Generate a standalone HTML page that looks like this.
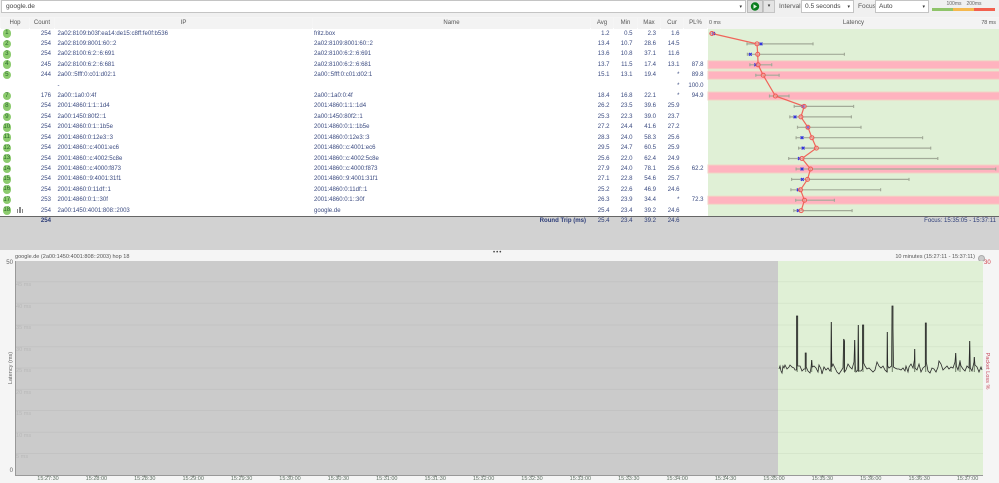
<!DOCTYPE html>
<html><head><meta charset="utf-8"><style>
html,body{margin:0;padding:0;width:999px;height:482px;overflow:hidden;background:#f5f5f5;font-family:"Liberation Sans",sans-serif;font-size:6.05px;color:#3a4a80}
div,span{position:absolute;white-space:nowrap}
.b{background:#fff;border:1px solid #c4c4c4;box-sizing:border-box;height:13px;top:0;line-height:12px;color:#444;font-size:6.6px}
.t{color:#555;font-size:6.6px;top:0;line-height:13px}
.th{top:18px;height:10.5px;line-height:10.5px;background:#f3f3f3;text-align:center;color:#555}
.r{left:0;width:708px;height:10px;line-height:10px}
.h{left:2.5px;top:.7px;width:8.6px;height:8.6px;line-height:8.6px;border-radius:50%;background:#8ccb6e;color:#2c6a2c;text-align:center;font-size:6.2px}
.c{left:20px;width:31px;text-align:right}
.i{left:57.5px}.n{left:314px}
.a{left:580px;width:29.5px;text-align:right}
.m{left:603px;width:29.5px;text-align:right}
.x{left:626px;width:30px;text-align:right}
.u{left:650px;width:29.5px;text-align:right}
.p{left:674px;width:29.5px;text-align:right}
.g{color:#b8b8b8;left:16px;font-size:5.6px;line-height:8px}
.tm{top:475px;width:40px;text-align:center;color:#5c6e60;font-size:5.5px;line-height:8px}
</style></head><body>
<div style="left:0;top:0;width:999px;height:17px;background:#f0f0f0"></div>
<div class="b" style="left:1px;width:745px;padding-left:4px">google.de<span style="right:3px;top:0;font-size:5px;color:#333">▾</span></div>
<div style="left:747px;top:0;width:16px;height:13px;background:#ddd;border:1px solid #bbb;box-sizing:border-box"></div>
<svg style="position:absolute;left:747px;top:0" width="16" height="13"><circle cx="8" cy="6.5" r="4.2" fill="#0a7d1e"/><path d="M6.5 4.3V8.7L10 6.5Z" fill="#dff5df"/></svg>
<div style="left:763px;top:0;width:12px;height:13px;background:#e4e4e4;border:1px solid #c4c4c4;box-sizing:border-box;text-align:center;line-height:11px;font-size:5px;color:#333">▾</div>
<div class="t" style="left:779px">Interval</div>
<div class="b" style="left:801px;width:53px;padding-left:3px">0.5 seconds<span style="right:3px;top:0;font-size:5px;color:#333">▾</span></div>
<div class="t" style="left:858px">Focus</div>
<div class="b" style="left:875px;width:54px;padding-left:3px">Auto<span style="right:3px;top:0;font-size:5px;color:#333">▾</span></div>
<div style="left:932px;top:7.5px;width:21px;height:3px;background:#8fc46a"></div>
<div style="left:953px;top:7.5px;width:21px;height:3px;background:#f5b84e"></div>
<div style="left:974px;top:7.5px;width:21px;height:3px;background:#f2604e"></div>
<div style="left:946px;top:1px;width:16px;text-align:center;font-size:5px;color:#666;line-height:6px">100ms</div>
<div style="left:966px;top:1px;width:16px;text-align:center;font-size:5px;color:#666;line-height:6px">200ms</div>

<div style="left:0;top:28px;width:708px;height:188px;background:#fff"></div>
<div style="left:708px;top:18px;width:291px;height:198px;background:#e0f0d6"></div>
<div class="th" style="left:1px;width:28px">Hop</div>
<div class="th" style="left:30px;width:24px">Count</div>
<div class="th" style="left:55px;width:257px">IP</div>
<div class="th" style="left:313px;width:277px">Name</div>
<div class="th" style="left:591px;width:22px">Avg</div>
<div class="th" style="left:614px;width:23px">Min</div>
<div class="th" style="left:638px;width:22px">Max</div>
<div class="th" style="left:661px;width:22px">Cur</div>
<div class="th" style="left:684px;width:23px">PL%</div>
<div class="th" style="left:708px;width:291px">Latency</div>
<div style="left:709px;top:18px;line-height:10.5px;font-size:5.4px;color:#555">0 ms</div>
<div style="right:3px;top:18px;line-height:10.5px;font-size:5.4px;color:#555">78 ms</div>

<div class="r" style="top:28.5px"><span class="h">1</span><span class="c">254</span><span class="i">2a02:8109:b03f:ea14:de15:c8ff:fe0f:b536</span><span class="n">fritz.box</span><span class="a">1.2</span><span class="m">0.5</span><span class="x">2.3</span><span class="u">1.6</span></div>
<div class="r" style="top:38.9px"><span class="h">2</span><span class="c">254</span><span class="i">2a02:8109:8001:60::2</span><span class="n">2a02:8109:8001:60::2</span><span class="a">13.4</span><span class="m">10.7</span><span class="x">28.6</span><span class="u">14.5</span></div>
<div class="r" style="top:49.3px"><span class="h">3</span><span class="c">254</span><span class="i">2a02:8100:6:2::6:691</span><span class="n">2a02:8100:6:2::6:691</span><span class="a">13.6</span><span class="m">10.8</span><span class="x">37.1</span><span class="u">11.6</span></div>
<div class="r" style="top:59.8px"><span class="h">4</span><span class="c">245</span><span class="i">2a02:8100:6:2::6:681</span><span class="n">2a02:8100:6:2::6:681</span><span class="a">13.7</span><span class="m">11.5</span><span class="x">17.4</span><span class="u">13.1</span><span class="p">87.8</span></div>
<div class="r" style="top:70.2px"><span class="h">5</span><span class="c">244</span><span class="i">2a00::5fff:0:c01:d02:1</span><span class="n">2a00::5fff:0:c01:d02:1</span><span class="a">15.1</span><span class="m">13.1</span><span class="x">19.4</span><span class="u">*</span><span class="p">89.8</span></div>
<div class="r" style="top:80.6px"><span class="i">-</span><span class="u">*</span><span class="p">100.0</span></div>
<div class="r" style="top:91px"><span class="h">7</span><span class="c">176</span><span class="i">2a00::1a0:0:4f</span><span class="n">2a00::1a0:0:4f</span><span class="a">18.4</span><span class="m">16.8</span><span class="x">22.1</span><span class="u">*</span><span class="p">94.9</span></div>
<div class="r" style="top:101.4px"><span class="h">8</span><span class="c">254</span><span class="i">2001:4860:1:1::1d4</span><span class="n">2001:4860:1:1::1d4</span><span class="a">26.2</span><span class="m">23.5</span><span class="x">39.6</span><span class="u">25.9</span></div>
<div class="r" style="top:111.9px"><span class="h">9</span><span class="c">254</span><span class="i">2a00:1450:80f2::1</span><span class="n">2a00:1450:80f2::1</span><span class="a">25.3</span><span class="m">22.3</span><span class="x">39.0</span><span class="u">23.7</span></div>
<div class="r" style="top:122.3px"><span class="h">10</span><span class="c">254</span><span class="i">2001:4860:0:1::1b5e</span><span class="n">2001:4860:0:1::1b5e</span><span class="a">27.2</span><span class="m">24.4</span><span class="x">41.6</span><span class="u">27.2</span></div>
<div class="r" style="top:132.7px"><span class="h">11</span><span class="c">254</span><span class="i">2001:4860:0:12e3::3</span><span class="n">2001:4860:0:12e3::3</span><span class="a">28.3</span><span class="m">24.0</span><span class="x">58.3</span><span class="u">25.6</span></div>
<div class="r" style="top:143.1px"><span class="h">12</span><span class="c">254</span><span class="i">2001:4860::c:4001:ec6</span><span class="n">2001:4860::c:4001:ec6</span><span class="a">29.5</span><span class="m">24.7</span><span class="x">60.5</span><span class="u">25.9</span></div>
<div class="r" style="top:153.5px"><span class="h">13</span><span class="c">254</span><span class="i">2001:4860::c:4002:5c8e</span><span class="n">2001:4860::c:4002:5c8e</span><span class="a">25.6</span><span class="m">22.0</span><span class="x">62.4</span><span class="u">24.9</span></div>
<div class="r" style="top:164px"><span class="h">14</span><span class="c">254</span><span class="i">2001:4860::c:4000:f873</span><span class="n">2001:4860::c:4000:f873</span><span class="a">27.9</span><span class="m">24.0</span><span class="x">78.1</span><span class="u">25.6</span><span class="p">62.2</span></div>
<div class="r" style="top:174.4px"><span class="h">15</span><span class="c">254</span><span class="i">2001:4860::9:4001:31f1</span><span class="n">2001:4860::9:4001:31f1</span><span class="a">27.1</span><span class="m">22.8</span><span class="x">54.6</span><span class="u">25.7</span></div>
<div class="r" style="top:184.8px"><span class="h">16</span><span class="c">254</span><span class="i">2001:4860:0:11df::1</span><span class="n">2001:4860:0:11df::1</span><span class="a">25.2</span><span class="m">22.6</span><span class="x">46.9</span><span class="u">24.6</span></div>
<div class="r" style="top:195.2px"><span class="h">17</span><span class="c">253</span><span class="i">2001:4860:0:1::30f</span><span class="n">2001:4860:0:1::30f</span><span class="a">26.3</span><span class="m">23.9</span><span class="x">34.4</span><span class="u">*</span><span class="p">72.3</span></div>
<div class="r" style="top:205.6px"><span class="h">18</span><span style="left:17px;top:3px;width:1.4px;height:4px;background:#888"></span><span style="left:19.3px;top:1.5px;width:1.4px;height:5.5px;background:#888"></span><span style="left:21.6px;top:3.5px;width:1.4px;height:3.5px;background:#888"></span><span class="c">254</span><span class="i">2a00:1450:4001:808::2003</span><span class="n">google.de</span><span class="a">25.4</span><span class="m">23.4</span><span class="x">39.2</span><span class="u">24.6</span></div>

<svg style="position:absolute;left:0;top:0" width="999" height="216" fill="none">
<g fill="#ffb3bf" stroke="#f2d3c4" stroke-width="1">
<rect x="708" y="60.8" width="292" height="8"/><rect x="708" y="71.2" width="292" height="8"/><rect x="708" y="92" width="292" height="8"/><rect x="708" y="165" width="292" height="8"/><rect x="708" y="196.2" width="292" height="8"/>
</g>
<path stroke="#a2aa98" stroke-width="1.2" d="M709.3 33.5H716M747 43.9H813M747 42.4V45.4M813 42.4V45.4M747.4 54.3H844.4M747.4 52.8V55.8M844.4 52.8V55.8M749.9 64.8H771.7M749.9 63.3V66.3M771.7 63.3V66.3M755.8 75.2H779.1M755.8 73.7V76.7M779.1 73.7V76.7M769.5 96H789M769.5 94.5V97.5M789 94.5V97.5M794.2 106.4H853.6M794.2 104.9V107.9M853.6 104.9V107.9M789.8 116.9H851.4M789.8 115.4V118.4M851.4 115.4V118.4M797.5 127.3H861M797.5 125.8V128.8M861 125.8V128.8M796.1 137.7H922.6M796.1 136.2V139.2M922.6 136.2V139.2M798.6 148.1H930.7M798.6 146.6V149.6M930.7 146.6V149.6M788.7 158.5H937.8M788.7 157V160M937.8 157V160M796.1 169H995.7M796.1 167.5V170.5M995.7 167.5V170.5M791.6 179.4H909M791.6 177.9V180.9M909 177.9V180.9M790.9 189.8H880.6M790.9 188.3V191.3M880.6 188.3V191.3M795.7 200.2H834.4M795.7 198.7V201.7M834.4 198.7V201.7M793.8 210.6H852.1M793.8 209.1V212.1M852.1 209.1V212.1"/>
<path stroke="#f0645a" stroke-width="1.2" d="M711.9 33.5L757 43.9L757.7 54.3L758.1 64.8L763.2 75.2L775.4 96L804.2 106.4L800.9 116.9L807.9 127.3L811.9 137.7L816.4 148.1L802 158.5L810.5 169L807.5 179.4L800.5 189.8L804.5 200.2L801.2 210.6"/>
<path stroke="#3030e0" stroke-width="1.2" d="M712 32.1l2.8 2.8m0-2.8l-2.8 2.8M759.6 42.5l2.8 2.8m0-2.8l-2.8 2.8M748.9 52.9l2.8 2.8m0-2.8l-2.8 2.8M754.4 63.4l2.8 2.8m0-2.8l-2.8 2.8M801.7 105l2.8 2.8m0-2.8l-2.8 2.8M793.6 115.5l2.8 2.8m0-2.8l-2.8 2.8M806.5 125.9l2.8 2.8m0-2.8l-2.8 2.8M800.6 136.3l2.8 2.8m0-2.8l-2.8 2.8M801.7 146.7l2.8 2.8m0-2.8l-2.8 2.8M798 157.1l2.8 2.8m0-2.8l-2.8 2.8M800.6 167.6l2.8 2.8m0-2.8l-2.8 2.8M800.9 178l2.8 2.8m0-2.8l-2.8 2.8M796.9 188.4l2.8 2.8m0-2.8l-2.8 2.8M796.9 209.2l2.8 2.8m0-2.8l-2.8 2.8"/>
<g stroke="#ef5a55" stroke-width="1" fill="#ffc8c4" fill-opacity=".4">
<circle cx="711.9" cy="33.5" r="2"/><circle cx="757" cy="43.9" r="2"/><circle cx="757.7" cy="54.3" r="2"/><circle cx="758.1" cy="64.8" r="2"/><circle cx="763.2" cy="75.2" r="2"/><circle cx="775.4" cy="96" r="2"/><circle cx="804.2" cy="106.4" r="2"/><circle cx="800.9" cy="116.9" r="2"/><circle cx="807.9" cy="127.3" r="2"/><circle cx="811.9" cy="137.7" r="2"/><circle cx="816.4" cy="148.1" r="2"/><circle cx="802" cy="158.5" r="2"/><circle cx="810.5" cy="169" r="2"/><circle cx="807.5" cy="179.4" r="2"/><circle cx="800.5" cy="189.8" r="2"/><circle cx="804.5" cy="200.2" r="2"/><circle cx="801.2" cy="210.6" r="2"/>
</g>
</svg>

<div style="left:0;top:216px;width:999px;height:1px;background:#666"></div>
<div style="left:0;top:217px;width:999px;height:33px;background:#d2d2d2"></div>
<div class="r" style="top:215.5px;font-weight:bold;color:#2c3c78;width:999px"><span class="c">254</span><span style="right:413px">Round Trip (ms)</span></div>
<div class="r" style="top:215.5px;color:#2c3c78"><span class="a">25.4</span><span class="m">23.4</span><span class="x">39.2</span><span class="u">24.6</span></div>
<div style="right:3px;top:215.5px;line-height:10px;color:#2c3c78">Focus: 15:35:05 - 15:37:11</div>

<div style="left:0;top:250px;width:999px;height:232px;background:#f5f5f5"></div>
<div style="left:493px;top:249px;color:#444;font-size:6px;line-height:8px;letter-spacing:1px">•••</div>
<div style="left:15px;top:253px;line-height:8px;color:#555;font-size:5.55px">google.de (2a00:1450:4001:808::2003) hop 18</div>
<div style="right:24px;top:253px;line-height:8px;color:#555;font-size:5.55px">10 minutes (15:27:11 - 15:37:11)</div>
<div style="left:977.5px;top:254.5px;width:5px;height:5px;border-radius:50%;background:#ccc;border:.5px solid #aaa"></div>
<div style="left:16px;top:261px;width:762px;height:214px;background:#cbcbcb"></div>
<div style="left:778px;top:261px;width:205px;height:214px;background:#e0f0d6"></div>
<div style="left:15px;top:261px;width:1px;height:215px;background:#999"></div>
<div style="left:15px;top:475px;width:968px;height:1px;background:#999"></div>
<svg style="position:absolute;left:0;top:0" width="999" height="482" fill="none">
<path stroke="#c3c3c3" stroke-width="1" d="M16 281.7H778M16 303.3H778M16 325H778M16 346.7H778M16 368H778M16 389.4H778M16 410.5H778M16 432.3H778M16 453.5H778"/>
<path stroke="#d6e6cc" stroke-width="1" d="M778 281.7H983M778 303.3H983M778 325H983M778 346.7H983M778 368H983M778 389.4H983M778 410.5H983M778 432.3H983M778 453.5H983"/>
<path stroke="#777" stroke-width=".7" d="M48 475v2M96.4 475v2M144.8 475v2M193.2 475v2M241.6 475v2M290 475v2M338.4 475v2M386.8 475v2M435.2 475v2M483.6 475v2M532 475v2M580.4 475v2M628.8 475v2M677.2 475v2M725.6 475v2M774 475v2M822.4 475v2M870.8 475v2M919.2 475v2M967.6 475v2"/>
<path stroke="#6f7f68" stroke-width="1" d="M797.2 316V372M805.7 353V372M811.7 360V372M831.3 322V372M844 339V372M854.7 340V372M858.3 325V372M863 325V372M887.3 332V372M892.3 306V372M914.7 349V372M925.7 323V372M955.7 353V372M960 360V372M969.7 341V372M974.3 357V372"/>
<polyline stroke="#2a2a2a" stroke-width=".8" points="779,369 780,366 781,371 782,373 783,366 784,368 785,365 787,369 789,367 790,365 792,367 794,368 795,370 796.5,370 796.5,316 797.7,316 797.7,366 800,366 802,371 804,369 805.2,369 805.2,353 806.2,353 806.2,367 808,371 810,373 811,368 811.7,360 812.3,367 814,366 816,368 818,372 819,365 821,369 822,374 824,367 826,370 828,368 830,371 830.8,369 831.3,322 831.8,367 833,364 835,368 837,372 839,374 841,371 843,368 843.6,339 844.6,341 844.6,372 846,370 848,364 850,367 852,369 854,362 854.7,340 855.3,366 856,372 857.8,370 858.3,325 858.8,371 861,371 862.5,369 862.5,325 863.7,325 863.7,363 865,366 867,369 869,368 871,370 873,372 875,370 877,362 879,366 881,368 883,366 885,370 887,372 887.3,332 887.7,366 889,368 891.6,366 892,306 893,306 893,328 893.5,367 895,368 897,369 899,369 901,370 903,368 905,371 906,366 908,372 909,367 911,364 913,368 914.4,360 914.7,349 915,368 917,370 919,364 921,372 923,368 925.3,366 925.3,323 926.3,323 926.3,362 928,371 930,373 932,368 934,369 936,372 938,367 939,361 941,364 943,370 945,368 947,366 949,369 951,367 953,368 955,362 955.7,353 956.4,366 958,370 960,361 961,366 963,369 965,371 967,366 969,368 969.7,341 970.3,368 972,371 974,362 974.3,357 975,365 977,367 979,372 981,367 982,370"/>
</svg>
<div style="left:3px;top:259px;width:10px;text-align:right;line-height:8px;color:#666">50</div>
<div style="left:3px;top:467px;width:10px;text-align:right;line-height:8px;color:#666">0</div>
<div style="left:-13px;top:364px;width:48px;text-align:center;line-height:8px;color:#666;transform:rotate(-90deg);font-size:5.6px">Latency (ms)</div>
<div style="left:984px;top:259px;line-height:8px;color:#d0404a">30</div>
<div style="left:963px;top:367px;width:48px;text-align:center;line-height:8px;color:#c85060;transform:rotate(90deg);font-size:5.6px">Packet Loss %</div>
<div class="g" style="top:281px">45 ms</div><div class="g" style="top:303px">40 ms</div><div class="g" style="top:324px">35 ms</div><div class="g" style="top:346px">30 ms</div><div class="g" style="top:367px">25 ms</div><div class="g" style="top:389px">20 ms</div><div class="g" style="top:410px">15 ms</div><div class="g" style="top:432px">10 ms</div><div class="g" style="top:453px">5 ms</div>
<div class="tm" style="left:28px">15:27:30</div><div class="tm" style="left:76.4px">15:28:00</div><div class="tm" style="left:124.8px">15:28:30</div><div class="tm" style="left:173.2px">15:29:00</div><div class="tm" style="left:221.6px">15:29:30</div><div class="tm" style="left:270px">15:30:00</div><div class="tm" style="left:318.4px">15:30:30</div><div class="tm" style="left:366.8px">15:31:00</div><div class="tm" style="left:415.2px">15:31:30</div><div class="tm" style="left:463.6px">15:32:00</div><div class="tm" style="left:512px">15:32:30</div><div class="tm" style="left:560.4px">15:33:00</div><div class="tm" style="left:608.8px">15:33:30</div><div class="tm" style="left:657.2px">15:34:00</div><div class="tm" style="left:705.6px">15:34:30</div><div class="tm" style="left:754px">15:35:00</div><div class="tm" style="left:802.4px">15:35:30</div><div class="tm" style="left:850.8px">15:36:00</div><div class="tm" style="left:899.2px">15:36:30</div><div class="tm" style="left:947.6px">15:37:00</div>
</body></html>
